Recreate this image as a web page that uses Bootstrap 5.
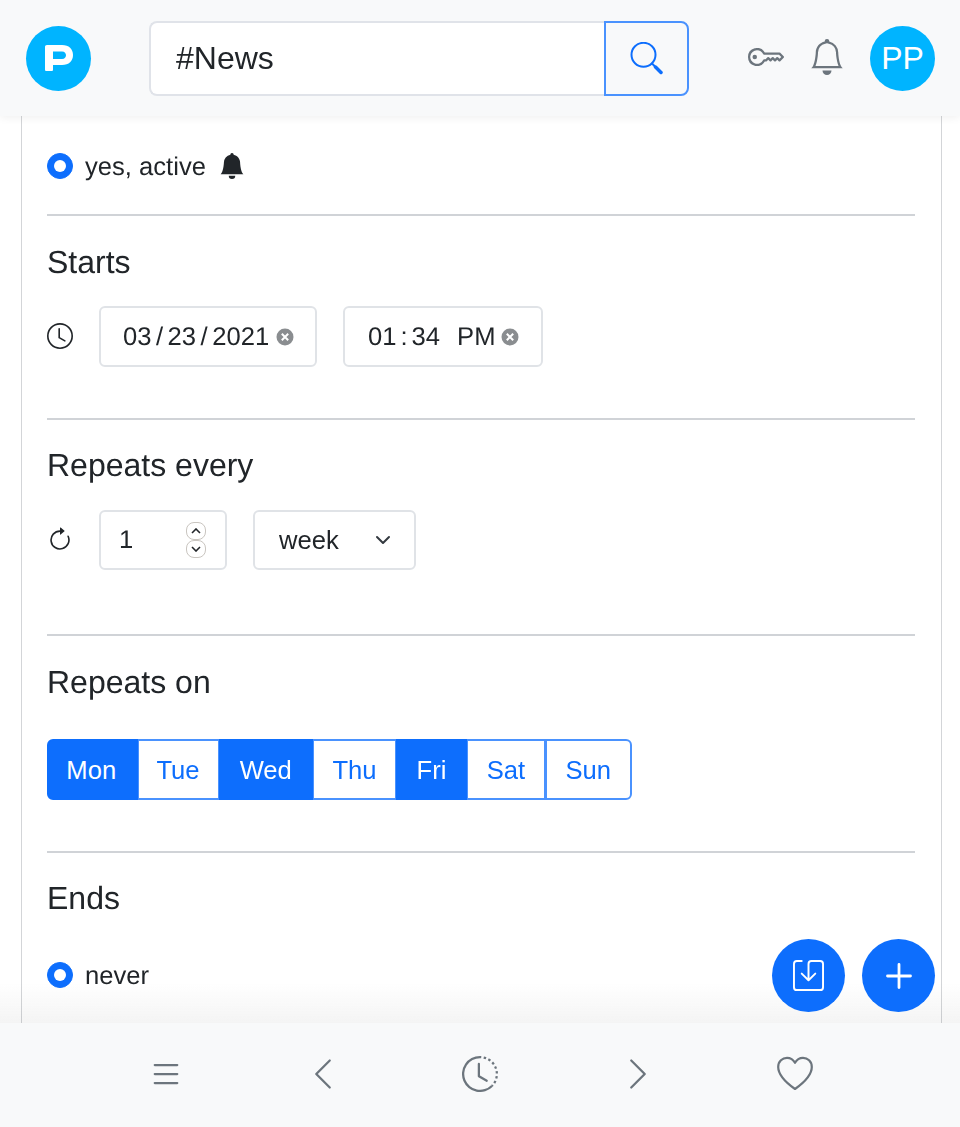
<!DOCTYPE html>
<html lang="en">
<head>
  <meta charset="UTF-8">
  <meta name="viewport" content="width=device-width, initial-scale=1">
  <title>Schedule</title>
  <link href="https://cdn.jsdelivr.net/npm/bootstrap@5.3.0/dist/css/bootstrap.min.css" rel="stylesheet">
  <style>
    html, body { height: 100%; }
    body {
      font-family: "Liberation Sans", Arial, sans-serif;
      font-size: 25.6px;
      color: #212529;
      overflow: hidden;
      text-rendering: geometricPrecision;
    }
    .app-shell { height: 1127px; }
    .top-bar {
      height: 116px;
      padding: 0 25px 0 26px;
      background: #f8f9fa;
      box-shadow: 0 2px 8px rgba(0,0,0,.06);
      z-index: 2;
    }
    .round-logo {
      width: 65px;
      height: 65px;
      background: #00b4ff;
      color: #fff;
    }
    .logo-glyph { margin-left: 1px; }
    .avatar-text { font-size: 32px; }
    .search-group { width: 540px; margin-left: 58px; height: 75px; }
    .search-group .form-control {
      font-size: 32px;
      padding-left: 25px;
      border: 2px solid #e0e3e9;
      border-right: 0;
      border-radius: 8px 0 0 8px;
      background: #fff;
      box-shadow: none;
    }
    .search-btn {
      width: 85px;
      border: 2px solid #4a92fe;
      border-radius: 0 8px 8px 0;
      display: flex;
      align-items: center;
      justify-content: center;
      background: transparent;
    }
    .top-icons { margin-left: 59px; margin-right: 27px; gap: 27px; }
    .top-icons svg { display: block; fill: #6c757d; margin-bottom: 2px; }
    .page-body { overflow: hidden; position: relative; }
    .sheet {
      margin: 0 18px 0 21px;
      height: 100%;
      padding: 0 26px 0 25px;
      border-left: 1px solid #d3d5d8;
      border-right: 1px solid #d3d5d8;
      background: #fff;
    }
    .radio-row { gap: 12px; line-height: 30px; }
    .radio-row .form-check-input {
      width: 26px;
      height: 26px;
      margin: 0;
      float: none;
    }
    .radio-row span { margin-top: 2px; }
    .radio-first { padding-top: 34px; height: 98px; }
    .active-bell { margin-left: 1px; }
    .sheet hr { margin: 0; border-color: #d0d3d7; border-top-width: 2px; opacity: 1; }
    .section-title { font-size: 32px; font-weight: 400; line-height: 38px; margin: 0; }
    .field-row { gap: 26px; }
    .row-icon { width: 26px; flex: none; }
    .clock-icon { margin-bottom: 2px; }
    .field-box {
      width: auto;
      border: 2px solid #e0e3e7;
      border-radius: 6px;
      font-size: 25.6px;
      line-height: 30px;
      display: flex;
      align-items: center;
    }
    .date-box { width: 218px; height: 61px; padding: 0 21px 0 22px; }
    .date-sep { margin: 0 4.5px; }
    .time-box { width: 200px; height: 61px; padding: 0 22px 0 23px; }
    .pm-gap { margin-left: 17px; }
    .num-box { width: 128px; height: 60px; padding: 0 19px 0 18px; justify-content: space-between; }
    .unit-select {
      width: 163px;
      height: 60px;
      padding: 0 24px 0 24px;
      font-size: 25.6px;
      border: 2px solid #e0e3e7;
      background-size: 22px 16px;
      background-position: right 20px center;
      border-radius: 6px;
    }
    .clear-dot { margin-left: auto; flex: none; }
    .spin-col { display: flex; flex-direction: column; width: 20px; }
    .spin-col span {
      height: 18px;
      border: 1.5px solid #c9c5c0;
      border-radius: 8px;
      display: flex;
      align-items: center;
      justify-content: center;
    }
    .spin-col span + span { margin-top: -0.5px; }
    .day-group .btn {
      font-size: 25.6px;
      padding: 0;
      height: 61px;
      line-height: 59px;
      flex: none;
      border: 2px solid #4a92fe;
    }
    .day-group .btn.active { background: #0d6efd; border-color: #0d6efd; }
    .day-group .btn:not(.active) { background: #fff; color: #0d6efd; }
    .starts-title { margin-top: 27px; margin-bottom: 25px; }
    .starts-row { margin-bottom: 51px; }
    .every-title { margin-top: 26px; margin-bottom: 26px; }
    .every-row { margin-bottom: 64px; }
    .on-title { margin-top: 27px; margin-bottom: 38px; }
    .day-group { margin-bottom: 51px; }
    .ends-title { margin-top: 26px; margin-bottom: 42px; }
    .day-mon { width: 90.5px; padding-right: 2px !important; }
    .day-tue { width: 83px; }
    .day-wed { width: 94.5px; }
    .day-thu { width: 85px; }
    .day-fri { width: 71px; }
    .day-sat { width: 80px; }
    .day-sun { width: 86.5px; }
    .bottom-fade {
      position: absolute;
      left: 0;
      right: 0;
      bottom: 0;
      height: 40px;
      background: linear-gradient(to bottom, rgba(244,244,244,0), rgba(244,244,244,1));
      mix-blend-mode: multiply;
      pointer-events: none;
    }
    .fab-stack {
      position: absolute;
      right: 25px;
      bottom: 11px;
      gap: 17px;
      z-index: 3;
    }
    .fab-round {
      width: 73px;
      height: 73px;
      padding: 0;
      display: flex;
      align-items: center;
      justify-content: center;
      border: 0;
    }
    .bottom-bar {
      height: 104px;
      background: #f8f9fa;
      padding: 0 147px 2px 147.5px;
      z-index: 2;
    }
    .bottom-bar svg { display: block; fill: #6c757d; }
  </style>
</head>
<body>
  <div class="app-shell d-flex flex-column">
    <header class="top-bar d-flex align-items-center flex-shrink-0 position-relative">
      <div class="round-logo rounded-circle d-flex align-items-center justify-content-center flex-shrink-0">
        <svg class="logo-glyph" width="28" height="26" viewBox="0 0 28 26"><path fill="#fff" fill-rule="evenodd" d="M2 0H17C24 0 28 4 28 10C28 16 24 20 17 20H8V24.500C8 25.500 7.500 26 6.500 26H1.500C.5 26 0 25.500 0 24.500V2C0 .7.700 0 2 0zM8 6.500V14H17C19.800 14 21 12 21 10.250C21 8.500 19.800 6.500 17 6.500z"/></svg>
      </div>
      <div class="input-group search-group flex-nowrap flex-shrink-0">
        <input class="form-control" type="text" value="#News" aria-label="Search">
        <button class="btn btn-outline-primary search-btn" type="button" aria-label="Search">
          <svg width="33" height="33" viewBox="0 0 33 33" fill="none" stroke="#0d6efd" stroke-linecap="round"><circle cx="13.500" cy="12.800" r="12" stroke-width="2"/><path d="M22 21.500l4 4" stroke-width="2"/><path d="M25.500 25l5.500 5.500" stroke-width="3.500"/></svg>
        </button>
      </div>
      <div class="top-icons d-flex align-items-center">
        <svg width="36" height="18" viewBox="0 4 16 8"><path d="M0 8a4 4 0 0 1 7.465-2H14a.5.5 0 0 1 .354.146l1.500 1.500a.5.5 0 0 1 0 .708l-1.500 1.500a.5.5 0 0 1-.708 0L13 9.207l-.646.647a.5.5 0 0 1-.708 0L11 9.207l-.646.647a.5.5 0 0 1-.708 0L9 9.207l-.646.647A.5.5 0 0 1 8 10h-.535A4 4 0 0 1 0 8zm4-3a3 3 0 1 0 2.712 4.285A.5.5 0 0 1 7.163 9h.63l.853-.854a.5.5 0 0 1 .708 0l.646.647.646-.647a.5.5 0 0 1 .708 0l.646.647.646-.647a.5.5 0 0 1 .708 0l.646.647.793-.793-1-1h-6.630a.5.5 0 0 1-.451-.285A3 3 0 0 0 4 5z"/><path d="M4 8a1 1 0 1 1-2 0 1 1 0 0 1 2 0z"/></svg>
        <svg width="32" height="36" viewBox="1 0 14 16"><path d="M8 16a2 2 0 0 0 2-2H6a2 2 0 0 0 2 2zM8 1.918l-.797.161A4.002 4.002 0 0 0 4 6c0 .628-.134 2.197-.459 3.742-.16.767-.376 1.566-.663 2.258h10.244c-.287-.692-.502-1.490-.663-2.258C12.134 8.197 12 6.628 12 6a4.002 4.002 0 0 0-3.203-3.920L8 1.917zM14.220 12c.223.447.481.801.78 1H1c.299-.199.557-.553.78-1C2.680 10.200 3 6.880 3 6c0-2.420 1.720-4.440 4.005-4.901a1 1 0 1 1 1.990 0A5.002 5.002 0 0 1 13 6c0 .880.320 4.200 1.220 6z"/></svg>
      </div>
      <div class="round-logo rounded-circle d-flex align-items-center justify-content-center flex-shrink-0 avatar-text">PP</div>
    </header>

    <main class="page-body flex-grow-1">
      <div class="sheet">
        <div class="radio-first">
          <div class="radio-row d-flex align-items-center">
            <input class="form-check-input" type="radio" checked aria-label="yes, active">
            <span>yes, active</span>
            <svg class="active-bell" width="26" height="26" viewBox="0 0 16 16" fill="#212529"><path d="M8 16a2 2 0 0 0 2-2H6a2 2 0 0 0 2 2zm.995-14.901a1 1 0 1 0-1.990 0A5.002 5.002 0 0 0 3 6c0 1.098-.5 6-2 7h14c-1.500-1-2-5.902-2-7 0-2.420-1.720-4.440-4.005-4.901z"/></svg>
          </div>
        </div>
        <hr>

        <h2 class="section-title starts-title">Starts</h2>
        <div class="field-row d-flex align-items-center starts-row">
          <svg class="row-icon clock-icon" width="26" height="26" viewBox="0 0 16 16" fill="#212529"><path d="M8 3.500a.5.5 0 0 0-1 0V9a.5.5 0 0 0 .252.434l3.500 2a.5.5 0 0 0 .496-.868L8 8.710V3.500z"/><path d="M8 16A8 8 0 1 0 8 0a8 8 0 0 0 0 16zm7-8A7 7 0 1 1 1 8a7 7 0 0 1 14 0z"/></svg>
          <div class="form-control field-box date-box">03<span class="date-sep">/</span>23<span class="date-sep">/</span>2021
            <svg class="clear-dot" width="18" height="18" viewBox="0 0 18 18"><circle cx="9" cy="9" r="8.500" fill="#8a8d90"/><path d="M5.800 5.800l6.400 6.400M12.200 5.800l-6.400 6.400" stroke="#fff" stroke-width="2"/></svg>
          </div>
          <div class="form-control field-box time-box">01<span class="mx-1">:</span>34<span class="pm-gap">PM</span>
            <svg class="clear-dot" width="18" height="18" viewBox="0 0 18 18"><circle cx="9" cy="9" r="8.500" fill="#8a8d90"/><path d="M5.800 5.800l6.400 6.400M12.200 5.800l-6.400 6.400" stroke="#fff" stroke-width="2"/></svg>
          </div>
        </div>
        <hr>

        <h2 class="section-title every-title">Repeats every</h2>
        <div class="field-row d-flex align-items-center every-row">
          <svg class="row-icon" width="26" height="26" viewBox="0 0 16 16" fill="#212529"><path fill-rule="evenodd" d="M8 3a5 5 0 1 0 4.546 2.914.5.5 0 0 1 .908-.417A6 6 0 1 1 8 2v1z"/><path d="M8 4.466V.534a.25.25 0 0 1 .41-.192l2.360 1.966c.12.1.12.284 0 .384L8.410 4.658A.25.25 0 0 1 8 4.466z"/></svg>
          <div class="form-control field-box num-box">
            <span>1</span>
            <span class="spin-col">
              <span><svg width="10" height="6" viewBox="0 0 10 6" fill="none" stroke="#212529" stroke-width="1.600"><path d="M1 5l4-4 4 4"/></svg></span>
              <span><svg width="10" height="6" viewBox="0 0 10 6" fill="none" stroke="#212529" stroke-width="1.600"><path d="M1 1l4 4 4-4"/></svg></span>
            </span>
          </div>
          <select class="form-select unit-select" aria-label="Unit">
            <option selected>week</option>
            <option>day</option>
            <option>month</option>
          </select>
        </div>
        <hr>

        <h2 class="section-title on-title">Repeats on</h2>
        <div class="btn-group day-group d-inline-flex" role="group" aria-label="Days">
          <button type="button" class="btn btn-primary active day-mon">Mon</button>
          <button type="button" class="btn btn-outline-primary day-tue">Tue</button>
          <button type="button" class="btn btn-primary active day-wed">Wed</button>
          <button type="button" class="btn btn-outline-primary day-thu">Thu</button>
          <button type="button" class="btn btn-primary active day-fri">Fri</button>
          <button type="button" class="btn btn-outline-primary day-sat">Sat</button>
          <button type="button" class="btn btn-outline-primary day-sun">Sun</button>
        </div>
        <hr>

        <h2 class="section-title ends-title">Ends</h2>
        <div class="radio-row d-flex align-items-center">
          <input class="form-check-input" type="radio" checked aria-label="never">
          <span>never</span>
        </div>
      </div>
      <div class="bottom-fade"></div>
      <div class="fab-stack d-flex">
        <button class="btn btn-primary rounded-circle fab-round" type="button" aria-label="Save">
          <svg width="31" height="31" viewBox="0 0 16 16" fill="#fff"><path d="M2 1a1 1 0 0 0-1 1v12a1 1 0 0 0 1 1h12a1 1 0 0 0 1-1V2a1 1 0 0 0-1-1H9.500a1 1 0 0 0-1 1v7.293l2.646-2.647a.5.5 0 0 1 .708.708l-3.500 3.500a.5.5 0 0 1-.708 0l-3.500-3.500a.5.5 0 1 1 .708-.708L7.500 9.293V2a2 2 0 0 1 2-2H14a2 2 0 0 1 2 2v12a2 2 0 0 1-2 2H2a2 2 0 0 1-2-2V2a2 2 0 0 1 2-2h2.500a.5.5 0 0 1 0 1H2z"/></svg>
        </button>
        <button class="btn btn-primary rounded-circle fab-round" type="button" aria-label="Add">
          <svg width="26" height="26" viewBox="0 0 26 26" fill="none" stroke="#fff" stroke-width="2.800" stroke-linecap="round"><path d="M13 1.500v23M1.500 13h23"/></svg>
        </button>
      </div>
    </main>

    <footer class="bottom-bar d-flex align-items-center justify-content-between flex-shrink-0">
      <svg width="36" height="36" viewBox="0 0 16 16"><path d="M2.500 12a.5.5 0 0 1 .5-.5h10a.5.5 0 0 1 0 1H3a.5.5 0 0 1-.5-.5zm0-4a.5.5 0 0 1 .5-.5h10a.5.5 0 0 1 0 1H3a.5.5 0 0 1-.5-.5zm0-4a.5.5 0 0 1 .5-.5h10a.5.5 0 0 1 0 1H3a.5.5 0 0 1-.5-.5z"/></svg>
      <svg width="36" height="36" viewBox="0 0 16 16"><path d="M11.354 1.646a.5.5 0 0 1 0 .708L5.707 8l5.647 5.646a.5.5 0 0 1-.708.708l-6-6a.5.5 0 0 1 0-.708l6-6a.5.5 0 0 1 .708 0z"/></svg>
      <svg width="36" height="36" viewBox="0 0 16 16"><path d="M8.515 1.019A7 7 0 0 0 8 1V0a8 8 0 0 1 .589.022l-.074.997zm2.004.45a7.003 7.003 0 0 0-.985-.299l.219-.976c.383.086.76.2 1.126.342l-.36.933zm1.370.71a7.010 7.010 0 0 0-.439-.27l.493-.87a8.025 8.025 0 0 1 .979.654l-.615.789a6.996 6.996 0 0 0-.418-.302zm1.834 1.790a6.990 6.990 0 0 0-.653-.796l.724-.69c.27.285.52.59.747.91l-.818.576zm.744 1.352a7.080 7.080 0 0 0-.214-.468l.893-.45a7.976 7.976 0 0 1 .45 1.088l-.95.313a7.023 7.023 0 0 0-.179-.483zm.53 2.507a6.991 6.991 0 0 0-.1-1.025l.985-.17c.067.386.106.778.116 1.170l-1 .025zm-.131 1.538c.033-.17.06-.339.081-.51l.993.123a7.957 7.957 0 0 1-.23 1.155l-.964-.267c.046-.165.086-.332.12-.501zm-.952 2.379c.184-.29.346-.594.486-.908l.914.405c-.16.36-.345.706-.555 1.038l-.845-.535zm-.964 1.205c.122-.122.239-.248.35-.378l.758.653a8.073 8.073 0 0 1-.401.432l-.707-.707z"/><path d="M8 1a7 7 0 1 0 4.950 11.950l.707.707A8.001 8.001 0 1 1 8 0v1z"/><path d="M7.500 3a.5.5 0 0 1 .5.5v5.210l3.248 1.856a.5.5 0 0 1-.496.868l-3.500-2A.5.5 0 0 1 7 9V3.500a.5.5 0 0 1 .5-.5z"/></svg>
      <svg width="36" height="36" viewBox="0 0 16 16"><path d="M4.646 1.646a.5.5 0 0 1 .708 0l6 6a.5.5 0 0 1 0 .708l-6 6a.5.5 0 0 1-.708-.708L10.293 8 4.646 2.354a.5.5 0 0 1 0-.708z"/></svg>
      <svg class="heart-icon" width="36" height="36" viewBox="0 0 36 36"><path fill="none" stroke="#6c757d" stroke-width="2.200" stroke-linejoin="round" d="M18 33C6 24.500 1.200 17.500 1.200 11C1.200 5.500 5.500 1.800 10 1.800C13.500 1.800 16.300 3.600 18 6.800C19.700 3.600 22.500 1.800 26 1.800C30.500 1.800 34.800 5.500 34.800 11C34.800 17.500 30 24.500 18 33z"/></svg>
    </footer>
  </div>
  <script src="https://cdn.jsdelivr.net/npm/bootstrap@5.3.0/dist/js/bootstrap.bundle.min.js"></script>
</body>
</html>
